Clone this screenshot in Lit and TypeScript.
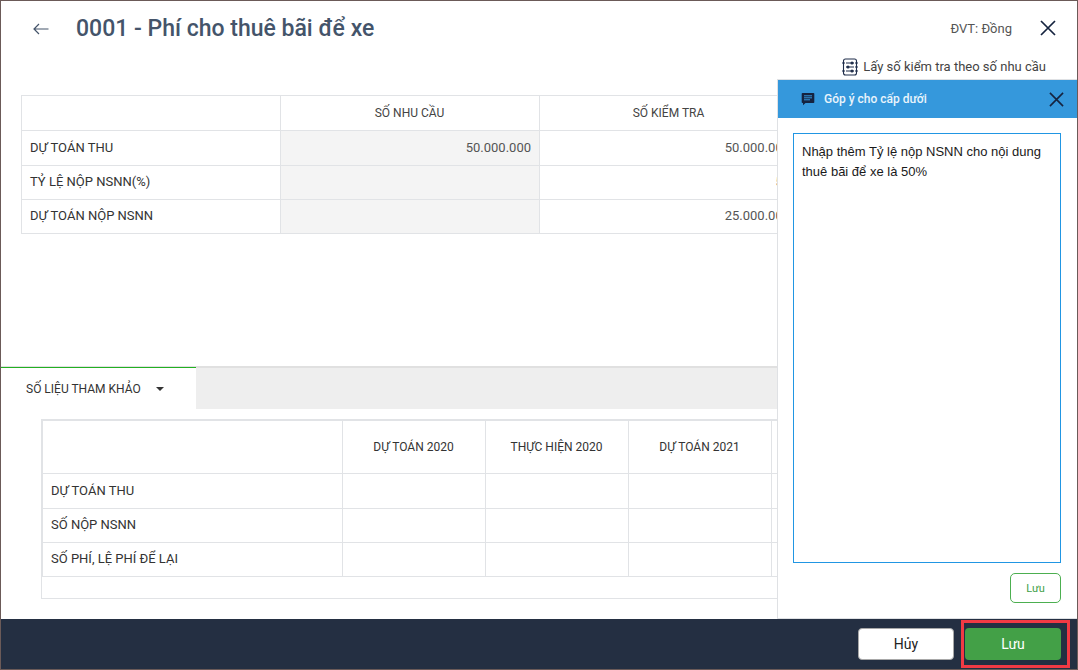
import { LitElement, html, css } from "lit";
import { customElement } from "lit/decorators.js";

const closeIcon = (size: number) => html`<svg class="x" width=${size} height=${size} viewBox="0 0 16 16" fill="none" stroke="#15233f" stroke-width="1.7"><path d="M1 1L15 15M15 1L1 15"/></svg>`;

@customElement("app-root")
export class AppRoot extends LitElement {
  static styles = css`
    :host {
      display: block;
      width: 1078px;
      height: 670px;
      box-sizing: border-box;
      position: relative;
      overflow: hidden;
      background: #fff;
      border: 1px solid #6b5a58;
      font-family: Roboto, "Noto Sans", sans-serif;
      color: #333;
    }
    .shell { display: flex; flex-direction: column; height: 668px; }
    .head {
      height: 54px;
      flex: none;
      display: flex;
      align-items: center;
      padding: 0 21px 0 32px;
      box-sizing: border-box;
    }
    .back { display: block; margin-right: 27px; margin-top: 1px; }
    h1 { margin: 0; font-size: 23px; font-weight: 500; color: #44546a; flex: 1; letter-spacing: 0; }
    .unit { font-size: 13px; color: #555; margin-right: 28px; }
    .tools {
      height: 24px;
      flex: none;
      box-sizing: border-box;
      display: flex;
      justify-content: flex-end;
      align-items: center;
      gap: 5px;
      padding: 0 31px 1px 0;
      font-size: 13px;
      color: #444;
    }
    .upper { height: 287px; flex: none; padding: 16px 0 0 20px; box-sizing: border-box; }
    table { border-collapse: collapse; table-layout: fixed; font-size: 13px; color: #333; }
    td, th { border: 1px solid #e1e3e6; padding: 0 8px; font-weight: 400; box-sizing: border-box; }
    td { padding-bottom: 2px; }
    th { text-align: center; color: #444; font-size: 12px; padding-right: 9px; }
    .t1 { width: 777px; }
    .t1 col { width: 259px; }
    .t1 td.num { text-align: right; color: #555; }
    .t1 td.off { background: #f4f4f4; }
    .r35 { height: 35px; }
    .r34 { height: 34px; }
    .tabs {
      height: 43px;
      flex: none;
      box-sizing: border-box;
      border-top: 2px solid #e0e0e0;
      display: flex;
      background: #eee;
      margin-bottom: 10px;
    }
    .tab {
      width: 195px;
      box-sizing: border-box;
      background: #fff;
      border-top: 1px solid #22b022;
      margin-top: -1px;
      display: flex;
      align-items: center;
      padding-left: 25px;
      gap: 15px;
      font-size: 12px;
      color: #333;
    }
    .caret { width: 0; height: 0; border: 4px solid transparent; border-top: 4px solid #333; border-bottom: 0; }
    .refwrap { padding-left: 40px; flex: 1; }
    .box { height: 180px; width: 900px; border: 1px solid #e1e3e6; box-sizing: border-box; }
    .t2 { width: 800px; }
    .t2 .c1 { width: 300px; }
    .t2 .c2, .t2 .c3, .t2 .c4 { width: 143px; }
    .t2 td { color: #333; }
    .t2 th { color: #333; }
    .r54 { height: 53px; }
    .foot {
      height: 50px;
      flex: none;
      background: #242f42;
      display: flex;
      justify-content: flex-end;
      align-items: center;
      gap: 11px;
      padding-right: 16px;
      position: relative;
      z-index: 2;
    }
    .btn {
      width: 96px;
      height: 32px;
      box-sizing: border-box;
      border-radius: 4px;
      display: flex;
      align-items: center;
      justify-content: center;
      font-size: 14px;
    }
    .cancel { background: #fff; border: 1px solid #a8a8a8; color: #222; }
    .ok { background: #43a047; color: #fff; position: relative; }
    .mark {
      position: absolute;
      left: -4px;
      right: -9px;
      top: -8px;
      bottom: -8px;
      border: 3px solid #f23a44;
      pointer-events: none;
    }
    .panel {
      position: absolute;
      left: 776px;
      top: 78px;
      width: 300px;
      height: 540px;
      box-sizing: border-box;
      background: #fff;
      border-left: 1px solid #dfe1e4;
      border-top: 1px solid #dfe1e4;
      border-bottom: 1px solid #dfe1e4;
      display: flex;
      flex-direction: column;
      z-index: 1;
    }
    .phead {
      height: 38px;
      flex: none;
      background: #3598dc;
      display: flex;
      align-items: center;
      padding: 0 13px 0 23px;
      color: #e9f4fb;
      font-size: 12px;
      font-weight: 500;
    }
    .phead .t { flex: 1; margin-left: 9px; }
    .pbody { flex: 1; display: flex; flex-direction: column; padding: 15px 16px 15px 15px; gap: 10px; }
    .area {
      flex: 1;
      border: 1px solid #2196e3;
      padding: 8px 8px;
      font-family: "Liberation Sans", Arial, sans-serif;
      font-size: 13px;
      line-height: 20px;
      color: #1a1a1a;
    }
    .save {
      align-self: flex-end;
      width: 51px;
      height: 30px;
      box-sizing: border-box;
      border: 1px solid #4caf50;
      border-radius: 5px;
      display: flex;
      align-items: center;
      justify-content: center;
      font-size: 11px;
      color: #3f9f4a;
    }
  `;

  render() {
    return html`
      <div class="shell">
        <div class="head">
          <svg class="back" width="16" height="12" viewBox="0 0 16 12" fill="none" stroke="#44546a" stroke-width="1.2"><path d="M15.5 6H1M6 1L1 6L6 11"/></svg>
          <h1>0001 - Phí cho thuê bãi để xe</h1>
          <span class="unit">ĐVT: Đồng</span>
          ${closeIcon(16)}
        </div>
        <div class="tools">
          <svg width="16" height="18" viewBox="0 0 16 18" fill="none" stroke="#1f2d4a" stroke-width="1.1">
            <rect x="1.5" y="1" width="13" height="16" rx="2"/>
            <path d="M0 5h3M0 13h3M13 5h3M13 9h3M13 13h3M4 5h8M4 9h8M4 13h8"/>
            <circle cx="10" cy="5" r="1" fill="#1f2d4a"/><circle cx="6" cy="9" r="1" fill="#1f2d4a"/><circle cx="10" cy="13" r="1" fill="#1f2d4a"/>
          </svg>
          <span>Lấy số kiểm tra theo số nhu cầu</span>
        </div>
        <div class="upper">
          <table class="t1">
            <colgroup><col /><col /><col /></colgroup>
            <tr class="r35"><th></th><th>SỐ NHU CẦU</th><th>SỐ KIỂM TRA</th></tr>
            <tr class="r35"><td>DỰ TOÁN THU</td><td class="num off">50.000.000</td><td class="num">50.000.000</td></tr>
            <tr class="r34"><td>TỶ LỆ NỘP NSNN(%)</td><td class="num off"></td><td class="num">50</td></tr>
            <tr class="r34"><td>DỰ TOÁN NỘP NSNN</td><td class="num off"></td><td class="num">25.000.000</td></tr>
          </table>
        </div>
        <div class="tabs">
          <div class="tab"><span>SỐ LIỆU THAM KHẢO</span><span class="caret"></span></div>
        </div>
        <div class="refwrap">
          <div class="box">
            <table class="t2">
              <colgroup><col class="c1" /><col class="c2" /><col class="c3" /><col class="c4" /><col /></colgroup>
              <tr class="r54"><th></th><th>DỰ TOÁN 2020</th><th>THỰC HIỆN 2020</th><th>DỰ TOÁN 2021</th><th></th></tr>
              <tr class="r35"><td>DỰ TOÁN THU</td><td></td><td></td><td></td><td></td></tr>
              <tr class="r34"><td>SỐ NỘP NSNN</td><td></td><td></td><td></td><td></td></tr>
              <tr class="r34"><td>SỐ PHÍ, LỆ PHÍ ĐỂ LẠI</td><td></td><td></td><td></td><td></td></tr>
            </table>
          </div>
        </div>
        <div class="foot">
          <div class="btn cancel">Hủy</div>
          <div class="btn ok">Lưu<span class="mark"></span></div>
        </div>
      </div>
      <div class="panel">
        <div class="phead">
          <svg width="14" height="14" viewBox="0 0 14 14"><path fill="#15233f" d="M1.500 1h11a.8.8 0 0 1 .8.8v8.400a.8.8 0 0 1-.8.8H4.500L2 13.200V11h-.5a.8.8 0 0 1-.8-.8V1.800a.8.8 0 0 1 .8-.8z"/><path stroke="#3598dc" stroke-width="1" d="M3 3.800h8M3 5.800h8M3 7.800h6"/></svg>
          <span class="t">Góp ý cho cấp dưới</span>
          ${closeIcon(15)}
        </div>
        <div class="pbody">
          <div class="area">Nhập thêm Tỷ lệ nộp NSNN cho nội dung thuê bãi để xe là 50%</div>
          <div class="save">Lưu</div>
        </div>
      </div>
    `;
  }
}
